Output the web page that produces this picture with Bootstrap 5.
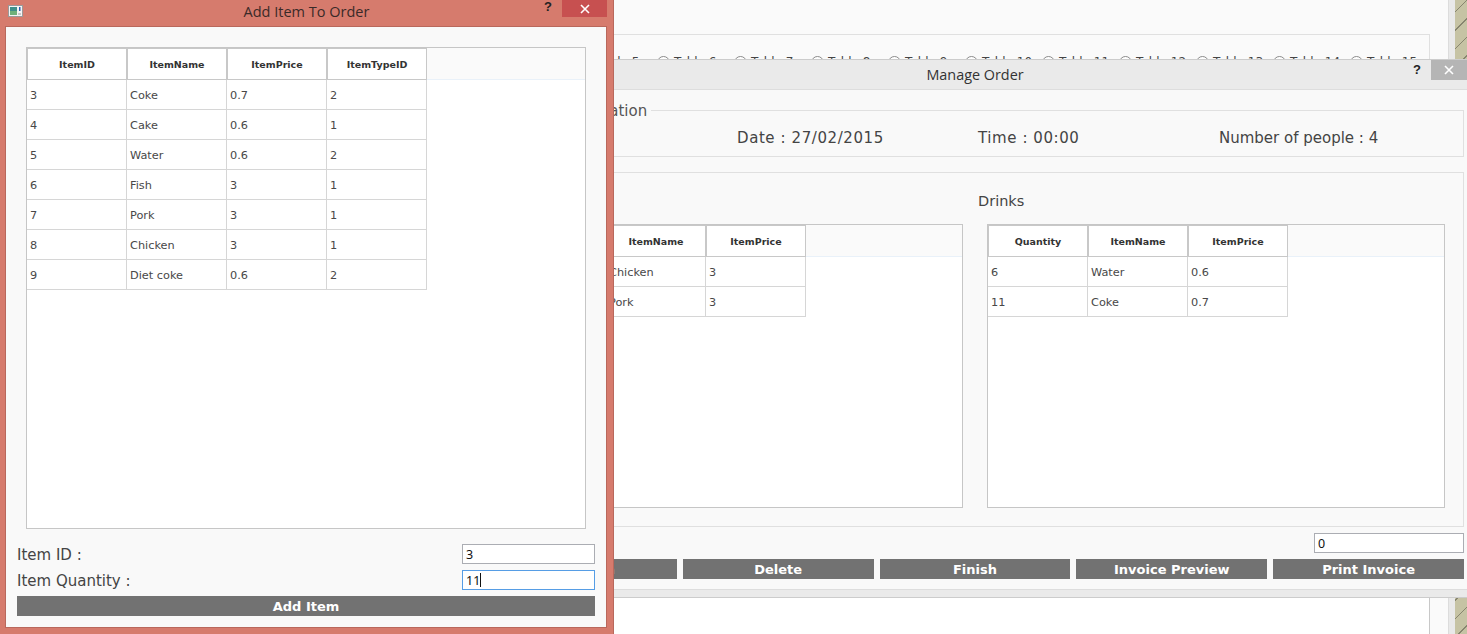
<!DOCTYPE html>
<html lang="en">
<head>
  <meta charset="UTF-8" />
  <meta name="viewport" content="width=device-width, initial-scale=1.0"/>
  <title>Add Item To Order</title>
  <link href="https://cdn.jsdelivr.net/npm/bootstrap@5.3.0/dist/css/bootstrap.min.css" rel="stylesheet">
  <style>
    body {
      margin: 0;
      overflow: hidden;
      font-family: "DejaVu Sans", "Liberation Sans", sans-serif;
      color: #444;
      background-color: #c6c3a4;
      background-image: repeating-linear-gradient(135deg, #c6c3a4 0 10px, #87856f 10px 11px, #c6c3a4 11px 13px);
    }

    .desk { position: relative; width: 1467px; height: 634px; overflow: hidden; }

    /* main window behind the dialogs */
    .back-win {
      position: absolute; left: 0; top: 0; width: 1455px; height: 634px;
      background: #fafafa;
      border-right: 6px solid #e9e9e9;
    }
    .back-inner { height: 100%; padding-top: 34px; padding-right: 18px; border-right: 1px solid #dcdcdc; }
    .back-group { height: 600px; border: 1px solid #e0e0e0; border-bottom: 0; padding: 20px 0 0 579px; }
    .table-radio { width: 77px; flex: none; font-size: 12px; line-height: 14px; }
    .table-radio .form-check-input {
      width: 13px; height: 13px; margin: 0; border-color: #8a8a8a; background-color: #fff; flex: none;
    }
    .back-list { height: 560px; margin: 60px -1px 0 -579px; background: #fff; border-right: 1px solid #c8c8c8; }

    /* manage order dialog */
    .manage-win {
      position: absolute; left: 483px; top: 59px; width: 984px; height: 539px;
      background: #f9f9f9;
      border-top: 1px solid #ccc;
    }
    .manage-title {
      height: 30px; background: #eaeaea; border-bottom: 1px solid #ddd;
      font-family: "Open Sans", sans-serif; font-size: 14.4px; color: #333;
    }
    .manage-body { height: 499px; padding: 20px 3px 0 3px; }
    .manage-foot { height: 9px; background: #eaeaea; border-top: 1px solid #ddd; border-bottom: 1px solid #ccc; }
    .info-box { position: relative; height: 47px; border: 1px solid #e0e0e0; padding: 16px 0 0 9px; font-size: 15px; }
    .info-col { width: 241px; }
    .info-spaced { letter-spacing: .58px; }
    .info-legend { position: absolute; left: 26px; top: -10px; padding-right: 4px; background: #f9f9f9; font-size: 15px; line-height: 20px; color: #555; }
    .lists-box { height: 355px; margin-top: 15px; border: 1px solid #e0e0e0; padding: 18px; }
    .lists-head { width: 489px; flex: none; margin-left: -8px; height: 33px; font-size: 14.5px; line-height: 20px; }
    .lists-pair { gap: 24px; }
    .lists-pair .grid-wrap { width: 458px; height: 284px; }

    /* table widgets */
    .grid-wrap { border: 1px solid #c6c6c6; background: #fff; overflow: hidden; }
    .grid-t.table { table-layout: fixed; border-collapse: separate; border-spacing: 0; margin: 0; width: 100%; }
    .grid-t.table > thead > tr > th {
      height: 32px; padding: 2px 0 0 0; text-align: center; vertical-align: middle;
      font-size: 9.5px; color: #333; background: #fff;
      border: 1px solid #c8c8c8;
    }
    .grid-t.table > thead > tr > th.filler { background: #fafafa; border: 0; border-bottom: 1px solid #e9f1f9; }
    .grid-t.table > tbody > tr > td {
      height: 30px; padding: 3px 0 0 3px; vertical-align: middle; white-space: nowrap;
      font-size: 11.3px; color: #484848; background: #fff;
      border: 0; border-right: 1px solid #d6d6d6; border-bottom: 1px solid #d6d6d6;
    }
    .grid-t.table > tbody > tr > td.filler { border: 0; }
    .col-w { width: 100px; }

    /* shared inputs and buttons */
    .line-input.form-control {
      width: 133px; height: 20px; min-height: 0; padding: 0 3px; border: 1px solid #abadb3; border-radius: 0;
      font-family: "Noto Sans", sans-serif; font-size: 12.5px; color: #111; background: #fff; box-shadow: none;
    }
    .line-input.is-focus { border-color: #569de5; }
    .wide-input.form-control { width: 150px; margin: 6px 0 6px auto; }
    .act-btn.btn {
      height: 20px; padding: 1px 0 0 0; border: 0; border-radius: 0; background: #727272; color: #fff;
      font-size: 13px; font-weight: 700; line-height: 19px;
    }
    .row-btns { gap: 6px; }
    .row-btns .act-btn { flex: 1 1 0; }

    /* add item dialog */
    .add-win {
      position: absolute; left: 0; top: 0; width: 614px; height: 634px;
      background: #d67b6d; border-right: 1px solid #b9685c;
      padding: 26px 6px 6px 5px;
    }
    .add-title {
      position: absolute; left: 0; right: 0; top: 0; height: 24px;
      font-family: "Open Sans", sans-serif; font-size: 14.5px; color: #3a2a28;
    }
    .app-ico { position: absolute; left: 8px; top: 5px; }
    .add-client { height: 602px; background: #f9f9f9; border: 1px solid #b9685c; padding: 20px 11px 0 11px; }
    .add-client .grid-wrap { width: 560px; height: 482px; margin: 0 9px 15px 9px; }
    .form-line { height: 20px; margin-bottom: 6px; font-size: 15px; }
    .form-line span { padding-top: 2px; }
    .caret-wrap { position: relative; }
    .form-line .caret-bar { position: absolute; left: 18px; top: 3px; width: 1px; height: 14px; padding: 0; background: #111; }

    .win-help {
      position: absolute; border: 0; background: none; padding: 0; width: 12px; height: 16px;
      font-family: "Liberation Sans", sans-serif; font-weight: 700; font-size: 13px; line-height: 16px; color: #222;
    }
    .win-close { position: absolute; top: 0; border: 0; padding: 0; display: flex; align-items: center; justify-content: center; }
    .add-win .win-help { left: 542px; top: -1px; }
    .add-win .win-close { left: 562px; width: 45px; height: 17px; background: #c75050; }
    .manage-win .win-help { left: 928px; top: 2px; }
    .manage-win .win-close { left: 948px; width: 36px; height: 20px; background: #b5b5b5; }
  </style>
</head>
<body>
  <div class="desk">

    <!-- main window behind -->
    <div class="back-win">
      <div class="back-inner">
        <div class="back-group">
          <div class="d-flex" id="tableRadios"></div>
          <div class="back-list"></div>
        </div>
      </div>
    </div>

    <!-- Manage Order -->
    <div class="manage-win">
      <div class="manage-title d-flex align-items-center justify-content-center">Manage Order</div>
      <button type="button" class="win-help">?</button>
      <button type="button" class="win-close" aria-label="Close">
        <svg width="10" height="10" viewBox="0 0 10 10"><path d="M1 1L9 9M9 1L1 9" stroke="#fff" stroke-width="1.6" fill="none"/></svg>
      </button>
      <div class="manage-body">
        <div class="info-box d-flex">
          <div class="info-legend">Order Information</div>
          <div class="info-col"></div>
          <div class="info-col info-spaced">Date : 27/02/2015</div>
          <div class="info-col info-spaced">Time : 00:00</div>
          <div class="info-col">Number of people : 4</div>
        </div>
        <div class="lists-box">
          <div class="d-flex">
            <div class="lists-head">Food</div>
            <div class="lists-head">Drinks</div>
          </div>
          <div class="d-flex lists-pair">
            <div class="grid-wrap">
              <table class="table grid-t">
                <thead><tr><th class="col-w">Quantity</th><th class="col-w">ItemName</th><th class="col-w">ItemPrice</th><th class="filler"></th></tr></thead>
                <tbody>
                  <tr><td></td><td>Chicken</td><td>3</td><td class="filler"></td></tr>
                  <tr><td></td><td>Pork</td><td>3</td><td class="filler"></td></tr>
                </tbody>
              </table>
            </div>
            <div class="grid-wrap">
              <table class="table grid-t">
                <thead><tr><th class="col-w">Quantity</th><th class="col-w">ItemName</th><th class="col-w">ItemPrice</th><th class="filler"></th></tr></thead>
                <tbody>
                  <tr><td>6</td><td>Water</td><td>0.6</td><td class="filler"></td></tr>
                  <tr><td>11</td><td>Coke</td><td>0.7</td><td class="filler"></td></tr>
                </tbody>
              </table>
            </div>
          </div>
        </div>
        <input type="text" class="form-control line-input wide-input" value="0">
        <div class="d-flex row-btns">
          <button type="button" class="btn act-btn">Add Item</button>
          <button type="button" class="btn act-btn">Delete</button>
          <button type="button" class="btn act-btn">Finish</button>
          <button type="button" class="btn act-btn">Invoice Preview</button>
          <button type="button" class="btn act-btn">Print Invoice</button>
        </div>
      </div>
      <div class="manage-foot"></div>
    </div>

    <!-- Add Item To Order -->
    <div class="add-win">
      <div class="add-title d-flex align-items-center justify-content-center">Add Item To Order</div>
      <svg class="app-ico" width="15" height="12" viewBox="0 0 15 12">
        <rect x="0.5" y="0.5" width="14" height="11" fill="#f4f4f4" stroke="#9a9a9a"/>
        <rect x="2" y="2" width="7" height="8" fill="#3f8f8a"/>
        <rect x="2" y="6" width="7" height="4" fill="#6fb07a"/>
        <rect x="11" y="2" width="1.5" height="4" fill="#2a5fb0"/>
        <rect x="10" y="8" width="3" height="2" fill="#c8c8c8"/>
      </svg>
      <button type="button" class="win-help">?</button>
      <button type="button" class="win-close" aria-label="Close">
        <svg width="10" height="10" viewBox="0 0 10 10"><path d="M1 1L9 9M9 1L1 9" stroke="#fff" stroke-width="1.6" fill="none"/></svg>
      </button>
      <div class="add-client">
        <div class="grid-wrap">
          <table class="table grid-t">
            <thead><tr><th class="col-w">ItemID</th><th class="col-w">ItemName</th><th class="col-w">ItemPrice</th><th class="col-w">ItemTypeID</th><th class="filler"></th></tr></thead>
            <tbody id="itemRows"></tbody>
          </table>
        </div>
        <div class="form-line d-flex align-items-center justify-content-between">
          <span>Item ID :</span>
          <input type="text" class="form-control line-input" value="3">
        </div>
        <div class="form-line d-flex align-items-center justify-content-between">
          <span>Item Quantity :</span>
          <div class="caret-wrap">
            <input type="text" class="form-control line-input is-focus" value="11">
            <span class="caret-bar"></span>
          </div>
        </div>
        <button type="button" class="btn act-btn d-block w-100">Add Item</button>
      </div>
    </div>
  </div>

  <script src="https://cdn.jsdelivr.net/npm/bootstrap@5.3.0/dist/js/bootstrap.bundle.min.js"></script>
  <script>
    const items = [
      [3, "Coke", 0.7, 2],
      [4, "Cake", 0.6, 1],
      [5, "Water", 0.6, 2],
      [6, "Fish", 3, 1],
      [7, "Pork", 3, 1],
      [8, "Chicken", 3, 1],
      [9, "Diet coke", 0.6, 2]
    ];
    document.getElementById("itemRows").innerHTML = items.map(r =>
      `<tr><td>${r[0]}</td><td>${r[1]}</td><td>${r[2]}</td><td>${r[3]}</td><td class="filler"></td></tr>`
    ).join("");

    let radios = "";
    for (let i = 5; i <= 15; i++) {
      radios += `<label class="table-radio d-flex align-items-center gap-1"><input class="form-check-input" type="radio" name="tableNo">Table ${i}</label>`;
    }
    document.getElementById("tableRadios").innerHTML = radios;
  </script>
</body>
</html>
